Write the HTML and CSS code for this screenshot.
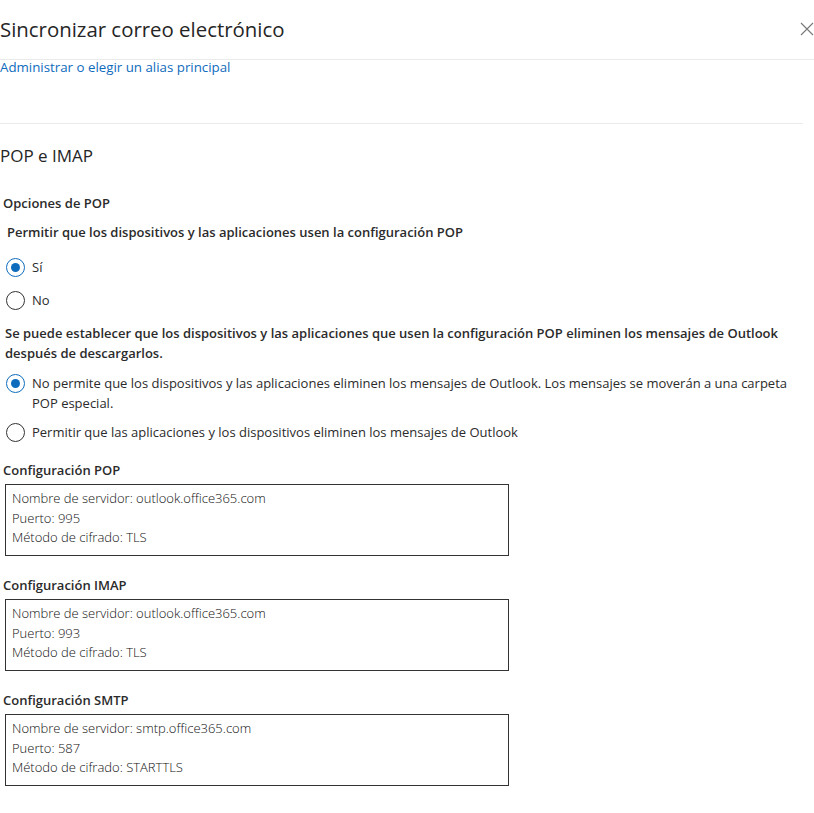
FILE: index.html
```html
<!DOCTYPE html>
<html lang="es">
<head>
<meta charset="utf-8">
<title>Sincronizar correo electrónico</title>
<link rel="stylesheet" href="styles.css">
</head>
<body>
<div class="panel">
  <header class="header">
    <h1 class="title">Sincronizar correo electrónico</h1>
    <button class="close" aria-label="Cerrar">
      <svg width="14" height="14" viewBox="0 0 14 14"><path d="M1 1L13 13M13 1L1 13" stroke="#777" stroke-width="1.1" fill="none"/></svg>
    </button>
  </header>
  <div class="alias">
    <a class="link" href="#">Administrar o elegir un alias principal</a>
  </div>
  <hr class="divider">
  <h2 class="section-title">POP e IMAP</h2>
  <h3 class="group-title">Opciones de POP</h3>
  <p class="question q-indent">Permitir que los dispositivos y las aplicaciones usen la configuración POP</p>
  <div class="radio-group">
    <label class="radio checked"><span class="dot"></span><span class="rtext">Sí</span></label>
    <label class="radio"><span class="dot"></span><span class="rtext">No</span></label>
  </div>
  <p class="question q-wide">Se puede establecer que los dispositivos y las aplicaciones que usen la configuración POP eliminen los mensajes de Outlook después de descargarlos.</p>
  <div class="radio-group tight">
    <label class="radio checked"><span class="dot"></span><span class="rtext">No permite que los dispositivos y las aplicaciones eliminen los mensajes de Outlook. Los mensajes se moverán a una carpeta POP especial.</span></label>
    <label class="radio"><span class="dot"></span><span class="rtext">Permitir que las aplicaciones y los dispositivos eliminen los mensajes de Outlook</span></label>
  </div>
  <h3 class="group-title config first">Configuración POP</h3>
  <div class="box">
    <div>Nombre de servidor: outlook.office365.com</div>
    <div>Puerto: 995</div>
    <div>Método de cifrado: TLS</div>
  </div>
  <h3 class="group-title config">Configuración IMAP</h3>
  <div class="box">
    <div>Nombre de servidor: outlook.office365.com</div>
    <div>Puerto: 993</div>
    <div>Método de cifrado: TLS</div>
  </div>
  <h3 class="group-title config">Configuración SMTP</h3>
  <div class="box">
    <div>Nombre de servidor: smtp.office365.com</div>
    <div>Puerto: 587</div>
    <div>Método de cifrado: STARTTLS</div>
  </div>
</div>
</body>
</html>
```
FILE: styles.css
```css
* { box-sizing: border-box; }
html, body { margin: 0; padding: 0; background: #fff; }
body {
  font-family: "Open Sans", "Noto Sans", sans-serif;
  color: #333;
  font-size: 13px;
}
.panel { width: 814px; }
.header {
  display: flex;
  justify-content: space-between;
  align-items: flex-start;
  height: 60px;
  border-bottom: 1px solid #eaeaea;
}
.title {
  margin: 15px 0 0 0;
  font-size: 20.4px;
  font-weight: 400;
  color: #252525;
  line-height: 28px;
}
.close {
  border: 0;
  background: none;
  padding: 0;
  margin: 22px 0 0 0;
  width: 14px;
  height: 14px;
  display: flex;
}
.alias { height: 63px; }
.link {
  display: block;
  width: max-content;
  color: #0f6cbd;
  text-decoration: none;
  font-size: 13.3px;
  line-height: 14px;
}
.divider {
  margin: 0;
  border: 0;
  border-top: 1px solid #eaeaea;
  width: 803px;
}
.section-title {
  margin: 21px 0 0 0;
  font-size: 17px;
  font-weight: 400;
  line-height: 22px;
  color: #252525;
}
.group-title {
  margin: 27px 0 0 3px;
  font-size: 13px;
  font-weight: 600;
  line-height: 18px;
  color: #2b2b2b;
}
.question {
  margin: 10px 0 0 0;
  font-weight: 600;
  line-height: 20px;
  color: #2b2b2b;
}
.q-indent { margin-left: 7px; }
.q-wide { margin: 13px 0 0 5px; width: 800px; }
.radio-group {
  display: flex;
  flex-direction: column;
  gap: 13px;
  margin: 15px 0 0 6px;
}
.radio-group.tight { gap: 9px; margin-top: 10px; }
.radio {
  display: flex;
  align-items: flex-start;
  gap: 7px;
  font-size: 13px;
  line-height: 20px;
  color: #2b2b2b;
}
.dot {
  flex: none;
  width: 19px;
  height: 19px;
  border: 1px solid #333;
  border-radius: 50%;
  position: relative;
  margin-top: 1px;
}
.radio.checked .dot { border-color: #0f6cbd; }
.radio.checked .dot::after {
  content: "";
  position: absolute;
  left: 4px;
  top: 4px;
  width: 9px;
  height: 9px;
  border-radius: 50%;
  background: #0f6cbd;
}
.rtext { max-width: 776px; }
.config { margin-top: 20px; }
.config.first { margin-top: 19px; }
.box {
  margin: 5px 0 0 5px;
  width: 504px;
  height: 72px;
  border: 1px solid #333;
  padding: 4px 6px;
  font-size: 13px;
  line-height: 19.5px;
  font-weight: 300;
  color: #111;
}
```
